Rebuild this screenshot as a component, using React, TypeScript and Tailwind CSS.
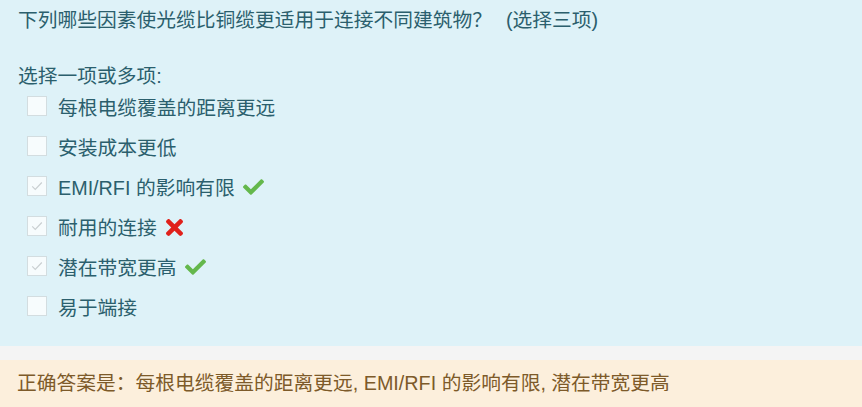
import React from 'react'

type Option = {
    label: string
    checked: boolean
    mark?: 'right' | 'wrong'
}

const options: Option[] = [
    { label: '每根电缆覆盖的距离更远', checked: false },
    { label: '安装成本更低', checked: false },
    { label: 'EMI/RFI 的影响有限', checked: true, mark: 'right' },
    { label: '耐用的连接', checked: true, mark: 'wrong' },
    { label: '潜在带宽更高', checked: true, mark: 'right' },
    { label: '易于端接', checked: false },
]

const CheckIcon = () => (
    <svg viewBox="0 64 512 384" width="21" height="16" className="fill-[#64b84c]">
        <path d="M173.898 439.404l-166.4-166.4c-9.997-9.997-9.997-26.206 0-36.204l36.203-36.204c9.997-9.998 26.207-9.998 36.204 0L192 312.69 432.095 72.596c9.997-9.997 26.207-9.997 36.204 0l36.203 36.204c9.997 9.997 9.997 26.206 0 36.204l-294.4 294.401c-9.998 9.997-26.207 9.997-36.204-.001z" />
    </svg>
)

const CrossIcon = () => (
    <svg viewBox="0 80 352 352" width="17" height="17" className="fill-[#e0211b]">
        <path d="M242.72 256l100.07-100.07c12.28-12.28 12.28-32.19 0-44.48l-22.24-22.24c-12.28-12.280-32.19-12.28-44.48 0L176 189.28 75.93 89.21c-12.28-12.28-32.19-12.28-44.48 0L9.21 111.45c-12.28 12.28-12.28 32.19 0 44.48L109.28 256 9.21 356.07c-12.28 12.28-12.28 32.19 0 44.48l22.24 22.24c12.28 12.28 32.2 12.28 44.48 0L176 322.72l100.07 100.07c12.28 12.28 32.2 12.28 44.48 0l22.24-22.24c12.28-12.28 12.28-32.19 0-44.48L242.72 256z" />
    </svg>
)

const Checkbox = ({ checked }: { checked: boolean }) => (
    <div className="flex size-[20px] shrink-0 items-center justify-center border border-[#d3dde0] bg-[#f7fcfd]">
        {checked && (
            <svg viewBox="0 0 16 16" width="14" height="14" fill="none" stroke="#c9cfd1" strokeWidth="1.3">
                <path d="M2.5 8.5l3.5 3.5 7.5-8" />
            </svg>
        )}
    </div>
)

export default function App() {
    return (
        <div
            className="w-[862px] h-[407px] overflow-hidden bg-[#f4f4f4] text-[19.75px]"
            style={{ fontFamily: '"Liberation Sans", "Noto Sans CJK SC", sans-serif' }}
        >
            <div className="bg-[#def2f8] px-[18px] pt-[5px] pb-[20px] text-[#2b5f6d]">
                <div className="h-[30px] leading-[30px] whitespace-nowrap">
                    下列哪些因素使光缆比铜缆更适用于连接不同建筑物？<span className="ml-[14px]">(选择三项)</span>
                </div>
                <div className="mt-[29px] h-[24px] leading-[24px]">选择一项或多项:</div>
                <div className="-mt-[2px] flex flex-col pl-[9px]">
                    {options.map(option => (
                        <div key={option.label} className="flex h-[40px] items-center">
                            <Checkbox checked={option.checked} />
                            <span className="ml-[11px] leading-[24px] pt-[3px]">{option.label}</span>
                            {option.mark === 'right' && (
                                <span className="ml-[8px] flex items-center pt-[2px]">
                                    <CheckIcon />
                                </span>
                            )}
                            {option.mark === 'wrong' && (
                                <span className="ml-[9px] flex items-center pt-[2px]">
                                    <CrossIcon />
                                </span>
                            )}
                        </div>
                    ))}
                </div>
            </div>
            <div className="mt-[14px] h-[60px] bg-[#fcefdc] px-[17px] pt-[8px] text-[#7d5a29]">
                <div className="h-[30px] leading-[30px] whitespace-nowrap">
                    正确答案是：每根电缆覆盖的距离更远, EMI/RFI 的影响有限, 潜在带宽更高
                </div>
            </div>
        </div>
    )
}
